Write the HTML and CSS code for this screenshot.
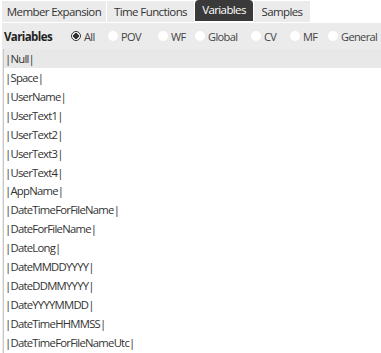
FILE: index.html
```html
<!DOCTYPE html>
<html lang="en">
<head>
    <meta charset="UTF-8">
    <meta name="viewport" content="width=device-width, initial-scale=1.0">
    <title>Variables</title>
    <link rel="stylesheet" href="styles.css">
</head>
<body>
    <div class="tabs">
        <div class="tab">Member Expansion</div>
        <div class="tab">Time Functions</div>
        <div class="tab active">Variables</div>
        <div class="tab">Samples</div>
    </div>

    <div class="panel">
        <div class="filter-row">
            <span class="filter-title">Variables</span>
            <label class="radio checked"><span class="dot"></span>All</label>
            <label class="radio"><span class="dot"></span>POV</label>
            <label class="radio"><span class="dot"></span>WF</label>
            <label class="radio"><span class="dot"></span>Global</label>
            <label class="radio"><span class="dot"></span>CV</label>
            <label class="radio"><span class="dot"></span>MF</label>
            <label class="radio"><span class="dot"></span>General</label>
        </div>

        <ul class="var-list">
            <li class="selected">|Null|</li>
            <li>|Space|</li>
            <li>|UserName|</li>
            <li>|UserText1|</li>
            <li>|UserText2|</li>
            <li>|UserText3|</li>
            <li>|UserText4|</li>
            <li>|AppName|</li>
            <li>|DateTimeForFileName|</li>
            <li>|DateForFileName|</li>
            <li>|DateLong|</li>
            <li>|DateMMDDYYYY|</li>
            <li>|DateDDMMYYYY|</li>
            <li>|DateYYYYMMDD|</li>
            <li>|DateTimeHHMMSS|</li>
            <li>|DateTimeForFileNameUtc|</li>
        </ul>
    </div>
</body>
</html>
```

FILE: styles.css
```css
* {
    box-sizing: border-box;
}

body {
    margin: 0;
    padding: 0 0 0 2px;
    font-family: "Open Sans", "Noto Sans", sans-serif;
    font-size: 11px;
    letter-spacing: -0.6px;
    color: #222;
    background: #fff;
    overflow: hidden;
}

.tabs {
    display: flex;
    height: 21px;
    margin-top: 1px;
    gap: 1px;
}

.tab {
    white-space: nowrap;
    text-align: center;
    line-height: 21px;
    background: #ebebeb;
    color: #333;
    font-size: 11.5px;
}

.tab:nth-child(1) { width: 104px; }
.tab:nth-child(2) { width: 87px; }
.tab:nth-child(3) { width: 58px; }
.tab:nth-child(4) { width: 56px; }

.tab.active {
    background: #3a3a3a;
    color: #fff;
    border-radius: 4px 4px 0 0;
    margin-top: -1px;
    line-height: 19px;
    height: 21px;
}

.panel {
    margin-top: 1px;
    background: #ebebeb;
}

.filter-row {
    display: flex;
    align-items: center;
    height: 26px;
    padding-left: 2px;
    white-space: nowrap;
}

.filter-title {
    font-weight: bold;
    font-size: 11.5px;
    width: 67px;
}

.radio {
    display: flex;
    align-items: center;
    color: #444;
}

.radio:nth-of-type(1) { width: 37px; }
.radio:nth-of-type(2) { width: 50px; }
.radio:nth-of-type(3) { width: 37px; }
.radio:nth-of-type(4) { width: 56px; }
.radio:nth-of-type(5) { width: 39px; }
.radio:nth-of-type(6) { width: 38px; }

.dot {
    flex: none;
    width: 10px;
    height: 10px;
    border-radius: 50%;
    background: #fff;
    margin-right: 3px;
}

.radio.checked .dot {
    border: 1px solid #333;
    background: radial-gradient(circle, #333 0 2.6px, #fff 3px);
}

.var-list {
    list-style: none;
    margin: 0 0 0 1px;
    padding: 0;
    background: #fff;
    border-left: 1px solid #c8c8c8;
    height: 306px;
}

.var-list li {
    height: 18.93px;
    line-height: 19px;
    padding-left: 1px;
    color: #333;
    font-size: 11.3px;
    letter-spacing: -0.75px;
}

.var-list li.selected {
    background: #e8e8e8;
}
```
